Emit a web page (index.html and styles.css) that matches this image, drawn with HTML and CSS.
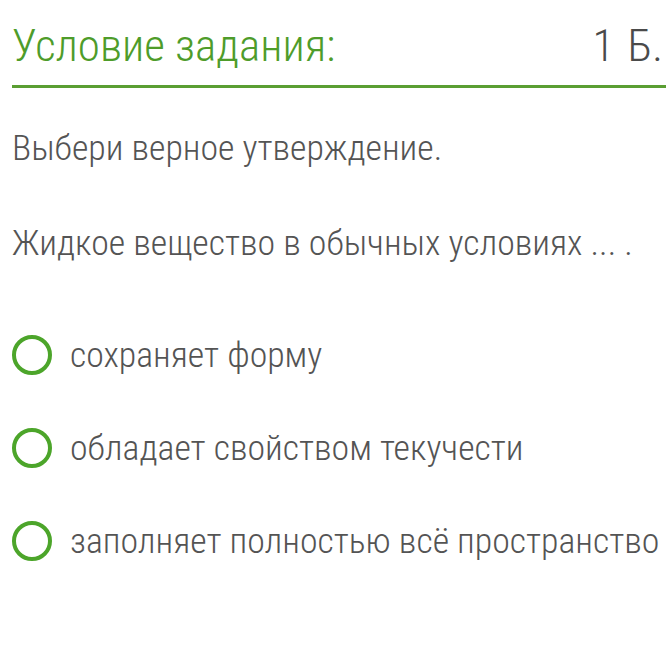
FILE: index.html
```html
<!DOCTYPE html>
<html lang="ru">
<head>
<meta charset="utf-8">
<link rel="stylesheet" href="styles.css">
</head>
<body>
<div class="task">
  <div class="task-head">
    <h1 class="task-title">Условие задания:</h1>
    <span class="task-points">1 Б.</span>
  </div>
  <p class="task-text">Выбери верное утверждение.</p>
  <p class="task-text">Жидкое вещество в обычных условиях ... .</p>
  <ul class="options">
    <li class="option"><span class="radio"></span><span class="option-label">сохраняет форму</span></li>
    <li class="option"><span class="radio"></span><span class="option-label">обладает свойством текучести</span></li>
    <li class="option"><span class="radio"></span><span class="option-label">заполняет полностью всё пространство</span></li>
  </ul>
</div>
</body>
</html>
```
FILE: styles.css
```css
html, body {
  margin: 0;
  padding: 0;
  background: #ffffff;
}
body {
  font-family: "Roboto Condensed", Roboto, "Noto Sans", sans-serif;
  font-weight: 300;
  font-stretch: 80%;
  color: #545454;
  overflow: hidden;
}
.task {
  padding-left: 12px;
  padding-top: 18px;
}
.task-head {
  display: flex;
  justify-content: space-between;
  align-items: baseline;
  border-bottom: 3px solid #5a9e32;
  height: 67px;
  white-space: nowrap;
}
.task-title {
  margin: 0;
  font-size: 45px;
  font-weight: 300;
  line-height: 56px;
  color: #4e9c2a;
}
.task-points {
  font-size: 45px;
  line-height: 56px;
  color: #4a4a4a;
  margin-right: 3px;
  word-spacing: 3px;
}
.task-text {
  margin: 0;
  font-size: 35.8px;
  line-height: 48px;
  white-space: nowrap;
}
.task-text:first-of-type {
  margin-top: 36px;
}
.task-text + .task-text {
  margin-top: 47px;
}
.options {
  list-style: none;
  margin: 64px 0 0;
  padding: 0;
  display: flex;
  flex-direction: column;
  gap: 45px;
}
.option {
  display: flex;
  align-items: center;
  gap: 18px;
  height: 48px;
  white-space: nowrap;
}
.radio {
  box-sizing: border-box;
  width: 40px;
  height: 40px;
  border: 4px solid #4ca52a;
  border-radius: 50%;
  flex: none;
}
.option-label {
  font-size: 35.8px;
  line-height: 48px;
}
```
